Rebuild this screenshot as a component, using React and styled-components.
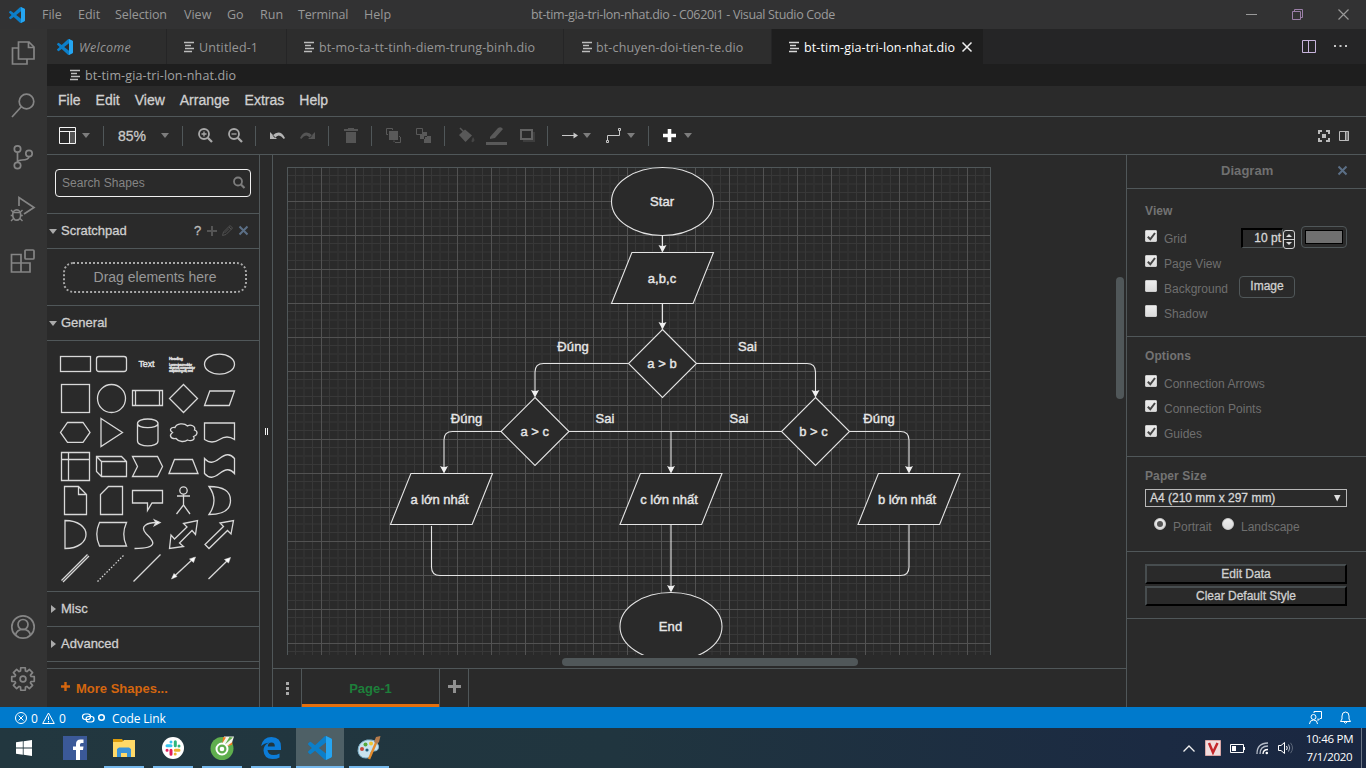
import React from "react";
import styled, { createGlobalStyle, css } from "styled-components";

const ui = `"Open Sans", "Noto Sans", sans-serif`;
const arial = `"Liberation Sans", Arial, sans-serif`;
const line = "#505759";

const Global = createGlobalStyle`
  * { box-sizing: border-box; }
  body { margin: 0; background: #2a2a2a; overflow: hidden; }
  svg { display: block; flex: none; overflow: visible; }
  button { font: inherit; }
`;

const Screen = styled.div`
  width: 1366px; height: 768px; display: flex; flex-direction: column;
  background: #2a2a2a; font-family: ${arial}; overflow: hidden;
`;
const heavy = css`-webkit-text-stroke: 0.3px currentColor;`;

/* ---------- window chrome ---------- */
const TitleBar = styled.header`
  height: 29px; flex: none; background: #323233; color: #989898; display: flex; align-items: center;
  font: 12.5px/29px ${ui}; padding-left: 9px;
`;
const MenuItem = styled.span`
  width: ${(p) => p.$w}px; flex: none; white-space: nowrap; letter-spacing: ${(p) => p.$ls || 0}px;
`;
const AppMark = styled.span`width: 33px; flex: none;`;
const WindowTitle = styled.span`
  width: 716px; flex: none; padding-left: 117px; white-space: nowrap; letter-spacing: ${(p) => p.$ls}px; color: #9b9b9b;
`;
const WindowButtons = styled.div`display: flex; gap: 35px;`;

const Workbench = styled.div`display: flex; height: 678px; flex: none;`;
const ActivityBar = styled.nav`
  width: 47px; flex: none; background: #333333; display: flex; flex-direction: column; align-items: center;
  padding: 11px 1px 15px 0; gap: 26px;
`;
const Push = styled.div`flex: 1;`;
const Editor = styled.main`flex: 1; display: flex; flex-direction: column; min-width: 0;`;
const TabStrip = styled.div`height: 35px; flex: none; background: #252526; display: flex;`;
const Tab = styled.div`
  width: ${(p) => p.$w}px; padding-left: ${(p) => p.$pl}px; display: flex; align-items: center; flex: none;
  background: ${(p) => (p.$active ? "#1e1e1e" : "#2d2d2d")}; color: ${(p) => (p.$active ? "#fff" : "#969696")};
  border-right: ${(p) => (p.$active ? 0 : 1)}px solid #252526; font: 12.5px/35px ${ui};
  font-style: ${(p) => (p.$italic ? "italic" : "normal")};
`;
const TabName = styled.span`
  width: ${(p) => p.$w}px; margin-left: ${(p) => p.$ml ?? 5}px; white-space: nowrap; letter-spacing: ${(p) => p.$ls ?? 0.13}px;
  padding-top: 1px;
`;
const TabActions = styled.div`margin-left: auto; display: flex; align-items: center; gap: 18px; padding-right: 18px;`;
const Crumbs = styled.div`
  height: 22px; flex: none; background: #1e1e1e; color: #a2a2a2; display: flex; align-items: center; padding-left: 23px;
  font: 12.5px/22px ${ui};
`;

/* ---------- diagram editor ---------- */
const DrawMenu = styled.div`
  height: 31px; flex: none; border-bottom: 1px solid ${line}; display: flex; gap: 15px; padding-left: 11px;
  font: 14px/28px ${arial}; color: #d0d0d0; ${heavy}
`;
const Toolbar = styled.div`
  height: 38px; flex: none; border-bottom: 1px solid ${line}; display: flex; align-items: center; padding-left: 12px;
`;
const Slot = styled.span`
  margin-left: ${(p) => p.$ml || 0}px; margin-right: ${(p) => p.$mr || 0}px; display: block;
`;
const Divider = styled.span`
  width: 1px; height: 20px; background: ${line}; margin: 0 ${(p) => p.$mr ?? 15}px 0 ${(p) => p.$ml ?? 13}px;
`;
const ZoomValue = styled.span`width: 42px; margin-left: -1px; font: 14px/20px ${arial}; color: #c8c8c8; ${heavy}`;
const Caret = styled.span`
  border: 4px solid transparent; border-top: 5px solid #7d7d7d; border-bottom: 0; margin-left: ${(p) => p.$ml ?? 6}px;
`;

const Body = styled.div`flex: 1; display: flex; min-height: 0;`;
const Sidebar = styled.aside`
  width: 213px; flex: none; border-right: 1px solid ${line}; display: flex; flex-direction: column;
`;
const SearchArea = styled.div`height: 59px; flex: none; border-bottom: 1px solid ${line}; padding: 14px 8px 0;`;
const SearchBox = styled.div`
  height: 28px; border: 1px solid #f0f0f0; border-radius: 4px; display: flex; align-items: center; justify-content: space-between;
  padding: 0 5px 0 6px; font-size: 12px; color: #858585; letter-spacing: 0.05px; line-height: 25px;
`;
const SectionHead = styled.div`
  height: 35px; flex: none; border-bottom: 1px solid ${line}; display: flex; align-items: center; padding-left: 2px;
  font: 13px/34px ${arial}; color: #cfcfcf; letter-spacing: ${(p) => p.$ls || 0}px; ${heavy}
`;
const SectionName = styled.span`margin-left: 4px; flex: 1; padding-bottom: 1px;`;
const Down = styled.i`border: 4px solid transparent; border-top: 5px solid #aaa; border-bottom: 0;`;
const Right = styled.i`border: 4px solid transparent; border-left: 5px solid #aaa; border-right: 0; margin: 0 1px 0 2px;`;
const HeadTools = styled.span`display: flex; align-items: center; width: 65px; gap: 5.500px; color: #bbb; padding-bottom: 1px;`;
const ScratchArea = styled.div`height: 57px; flex: none; border-bottom: 1px solid ${line}; padding: 13px 12px 0 16px;`;
const DropBox = styled.div`
  height: 31px; border: 2px dotted #a8a8a8; border-radius: 10px; text-align: center; font: 14px/27px ${arial}; color: #989898;
`;
const Palette = styled.div`
  height: 251px; flex: none; border-bottom: 1px solid ${line}; padding: 6px 0 0 10px; display: grid;
  grid-template-columns: repeat(5, 36px); grid-auto-rows: 34px;
`;
const MoreShapes = styled.div`
  margin-top: 6px; flex: 1; border-top: 1px solid ${line}; display: flex; padding-left: 14px; color: #d4660f;
  font: bold 13px/39px ${arial}; gap: 6px;
`;
const Splitter = styled.div`
  width: 13px; flex: none; border-right: 1px solid ${line}; display: flex; align-items: center; justify-content: center; gap: 1px;
`;
const Grip = styled.i`width: 1px; height: 7px; background: #f2f2f2;`;

const Center = styled.section`width: 853px; flex: none; display: flex; flex-direction: column;`;
const CanvasRow = styled.div`height: 500px; flex: none; display: flex;`;
const CanvasClip = styled.div`width: 843px; height: 500px; overflow: hidden;`;
const VTrack = styled.div`width: 10px; padding-top: 122px;`;
const VThumb = styled.div`width: 8px; height: 122px; border-radius: 4px; background: ${line};`;
const HTrack = styled.div`height: 13px; flex: none; padding: 3px 0 0 289px;`;
const HThumb = styled.div`width: 296px; height: 8px; border-radius: 4px; background: ${line};`;
const PageBar = styled.div`flex: 1; border-top: 1px solid ${line}; display: flex;`;
const PageCell = styled.div`
  width: ${(p) => p.$w}px; border-right: 1px solid ${line}; display: flex; align-items: center; justify-content: center;
  padding-bottom: ${(p) => p.$pb || 0}px;
`;
const PageTab = styled(PageCell)`
  font: bold 13px/35px ${arial}; color: #1d7f3a; box-shadow: inset 0 -3px 0 #e46f0d;
`;

const Panel = styled.aside`
  flex: 1; border-left: 1px solid ${line}; font: 12px/25px ${arial}; color: #6f6f6f; display: flex; flex-direction: column;
`;
const PanelHead = styled.div`
  height: 34px; flex: none; border-bottom: 1px solid ${line}; font: bold 13px/31px ${arial}; display: flex; align-items: center;
  padding: 0 0 2px 94px; letter-spacing: 0.05px; color: #707070;
`;
const PanelX = styled.span`margin-left: 65px;`;
const Group = styled.div`
  height: ${(p) => p.$h}px; flex: none; border-bottom: 1px solid ${line}; padding: ${(p) => p.$pt ?? 9}px 19px 0 18px;
`;
const GroupTitle = styled.div`font: bold 12px/26px ${arial}; letter-spacing: 0.1px; color: #737373;`;
const Row = styled.div`display: flex; height: 25px; padding-left: ${(p) => p.$pl || 0}px;`;
const Check = styled.span`
  width: 12px; height: 12px; flex: none; background: linear-gradient(#ededed, #dcdcdc); margin: 6px 7px 0 0; border: 1px solid #ccc;
  border-radius: ${(p) => (p.$round ? 6 : 1)}px; display: grid; place-items: center;
`;
const Dot = styled.i`width: 6px; height: 6px; border-radius: 3px; background: #555;`;
const RowText = styled.span`width: ${(p) => p.$w}px; padding-top: 3px; line-height: 22px; white-space: nowrap; margin-top: 1px;`;
const PtInput = styled.div`
  width: 42px; height: 20px; border: 2px inset #111; border-color: #000 ${line} ${line} #000; border-width: 2px 1px 1px 2px;
  font: 12px/17px ${arial}; color: #d6d6d6; text-align: right; padding-right: 1px; ${heavy}
`;
const Spin = styled.div`
  width: 12px; height: 19px; border: 1px solid #d0d0d0; border-radius: 3px; margin: 2px 6px 0 0; display: flex; flex-direction: column;
  align-items: center; justify-content: space-between; padding: 3px 0;
`;
const SpinArrow = styled.i`
  border: 3px solid transparent;
  ${(p) => (p.$up ? "border-bottom: 3px solid #ddd; border-top: 0;" : "border-top: 3px solid #ddd; border-bottom: 0;")}
`;
const SpinBar = styled.i`width: 10px; height: 1px; background: #d0d0d0;`;
const Swatch = styled.div`width: 46px; height: 22px; margin-top: -2px; border: 1px solid ${line}; border-radius: 4px; padding: 3px;`;
const SwatchFill = styled.div`height: 14px; background: #707070; border: 1px solid #000;`;
const ImageButton = styled.div`
  width: 56px; height: 22px; margin-top: 2px; border: 1px solid ${line}; border-radius: 4px; text-align: center; color: #d0d0d0;
  line-height: 18px; ${heavy}
`;
const Select = styled.div`
  height: 18px; border: 1px solid #b8b8b8; display: flex; justify-content: space-between; padding: 0 6px 0 4px; margin-bottom: 5px;
  color: #d6d6d6; line-height: 15px; align-items: center; ${heavy}
`;
const WideButton = styled.div`
  height: 20px; margin-bottom: 2px; border: 2px outset #555; border-color: #474d4f #000 #000 #474d4f; text-align: center;
  color: #d0d0d0; line-height: 16px; ${heavy}
`;

/* ---------- status bar and taskbar ---------- */
const StatusBar = styled.footer`
  height: 21px; flex: none; background: #007acc; color: #fff; display: flex; align-items: center; font: 12px/21px ${ui};
  padding-left: 15px;
`;
const StatusText = styled.span`width: ${(p) => p.$w}px; padding-left: 4px; white-space: nowrap; padding-top: 1px; letter-spacing: ${(p) => p.$ls || 0}px;`;
const Taskbar = styled.footer`
  height: 40px; flex: none; background: linear-gradient(90deg, #22373f, #20353f 45%, #1b2a42 85%, #1a2741); display: flex;
`;
const Task = styled.div`
  width: ${(p) => p.$w || 49}px; display: flex; flex-direction: column; align-items: center; justify-content: center; flex: none;
  background-color: ${(p) => (p.$active ? "#4e6066" : "transparent")};
  background-image: ${(p) => (p.$run ? "linear-gradient(#76b9ed, #76b9ed)" : "none")};
  background-size: ${(p) => (p.$active ? "100%" : "40px")} 2px; background-position: center bottom; background-repeat: no-repeat;
`;
const Tray = styled.div`margin-left: auto; display: flex; align-items: center; color: #fff;`;
const Clock = styled.div`
  width: 62px; margin-left: 5px; padding-right: 1px; font: 11.5px/18.5px ${ui}; text-align: center; letter-spacing: -0.25px;
`;
const DesktopEdge = styled.div`width: 5px; height: 40px; border-left: 1px solid #6c7686;`;

const Svg = ({ w, h, children, vb, ...rest }) => (
  <svg width={w} height={h} viewBox={vb || `0 0 ${w} ${h}`} fill="none" {...rest}>
    {children}
  </svg>
);

const VSMark = ({ s }) => (
  <Svg w={s} h={s} vb="0 0 24 24">
    <path
      fill="#0c7fc9"
      d="M23.15 2.587L18.21.21a1.494 1.494 0 0 0-1.705.29l-9.46 8.63-4.12-3.128a.999.999 0 0 0-1.276.057L.327 7.261A1 1 0 0 0 .326 8.74L3.899 12 .326 15.26a1 1 0 0 0 .001 1.479L1.65 17.94a.999.999 0 0 0 1.276.057l4.12-3.128 9.46 8.63a1.492 1.492 0 0 0 1.704.29l4.942-2.377A1.5 1.5 0 0 0 24 20.06V3.939a1.5 1.5 0 0 0-.85-1.352zm-5.146 14.861L10.826 12l7.178-5.448v10.896z"
    />
    <path fill="#25a5f1" d="M18 .1l5.15 2.49A1.5 1.5 0 0 1 24 3.94v16.12a1.5 1.5 0 0 1-.85 1.35L18 23.9z" />
  </Svg>
);
const FileLines = ({ bright }) => (
  <Svg w={10} h={10} stroke={bright ? "#d8d8d8" : "#bdbdbd"} strokeWidth="1.300">
    <path d="M0 .5H10M1 3.5H7M1 6.5H10M0 9.5H8" />
  </Svg>
);
const Cross = ({ s, c, sw = 1 }) => (
  <Svg w={s} h={s} stroke={c} strokeWidth={sw}>
    <path d={`M.5 .5L${s - 0.5} ${s - 0.5}M${s - 0.5} .5L.5 ${s - 0.5}`} />
  </Svg>
);
const Plus = ({ s, c, sw }) => (
  <Svg w={s} h={s} stroke={c} strokeWidth={sw}>
    <path d={`M${s / 2} 0V${s}M0 ${s / 2}H${s}`} />
  </Svg>
);

const gearPath = (() => {
  const pts = [];
  for (let i = 0; i < 8; i++) {
    const a = (i * Math.PI) / 4 - Math.PI / 2;
    [[-0.3, 8.4], [-0.2, 11.5], [0.2, 11.5], [0.3, 8.4]].forEach(([d, r]) =>
      pts.push(`${(12 + r * Math.cos(a + d)).toFixed(2)} ${(12 + r * Math.sin(a + d)).toFixed(2)}`)
    );
  }
  return `M${pts.join("L")}Z`;
})();

const Activity = ({ children }) => (
  <Svg w={26} h={26} stroke="#858585" strokeWidth="1.7">
    {children}
  </Svg>
);

const Activities = () => (
  <ActivityBar>
    <Activity>
      <path d="M8.5 2H19L24 7V19H8.5ZM18.5 2V7.5H24M8.5 8H2.5V24H17V19" />
    </Activity>
    <Activity>
      <circle cx="16.5" cy="9.5" r="7.3" />
      <path d="M11.3 14.7L2 25" />
    </Activity>
    <Activity>
      <circle cx="7.5" cy="5" r="3.2" /><circle cx="7.5" cy="21.5" r="3.2" /><circle cx="19" cy="9.5" r="3.2" />
      <path d="M7.5 8.2V18.3M19 12.7C18.5 16 15 16 12 16Q8 16 7.5 18.5" />
    </Activity>
    <Activity>
      <path d="M9 10V1.5L24 11.5L14 18" />
      <ellipse cx="6.7" cy="19" rx="4" ry="5.2" />
      <path d="M3.5 16.5H10M1 14L3.5 16.5M12.5 14L10 16.5M.7 19.5H3M10.5 19.5H12.8M1 25L3.5 22.5M12.5 25L10 22.5" strokeWidth="1.4" />
    </Activity>
    <Activity>
      <path d="M1.5 6.5H11V24H1.5ZM1.5 15H20V24H11" />
      <rect x="15" y="2" width="9" height="9" rx="1" />
    </Activity>
    <Push />
    <Activity>
      <circle cx="13" cy="13" r="11.2" /><circle cx="13" cy="10.5" r="5" />
      <path d="M5.5 21Q7 15.3 13 15.3T20.5 21" />
    </Activity>
    <Activity>
      <g transform="translate(1 1)">
        <path d={gearPath} strokeLinejoin="round" />
        <circle cx="12" cy="12" r="2.9" />
      </g>
    </Activity>
  </ActivityBar>
);

const TitleRow = () => (
  <TitleBar>
    <AppMark><VSMark s={16} /></AppMark>
    <MenuItem $w={36}>File</MenuItem>
    <MenuItem $w={37}>Edit</MenuItem>
    <MenuItem $w={69} $ls={-0.1}>Selection</MenuItem>
    <MenuItem $w={43}>View</MenuItem>
    <MenuItem $w={33}>Go</MenuItem>
    <MenuItem $w={38}>Run</MenuItem>
    <MenuItem $w={66} $ls={-0.15}>Terminal</MenuItem>
    <MenuItem $w={50}>Help</MenuItem>
    <WindowTitle $ls={-0.34}>bt-tim-gia-tri-lon-nhat.dio - C0620i1 - Visual Studio Code</WindowTitle>
    <Push />
    <WindowButtons>
      <Svg w={11} h={11} stroke="#999"><path d="M0 5.5H11" /></Svg>
      <Svg w={11} h={11} stroke="#9b7fa8"><path d="M.5 2.5H8.5V10.5H.5ZM2.5 2V.5H10.5V8.5H9" /></Svg>
      <Cross s={11} c="#999" sw={1.2} />
    </WindowButtons>
    <Slot $mr={17} />
  </TitleBar>
);

const Tabs = () => (
  <TabStrip>
    <Tab $w={120} $pl={10} $italic><VSMark s={16} /><TabName $ml={6} $ls={0.3}>Welcome</TabName></Tab>
    <Tab $w={120} $pl={17}><FileLines /><TabName>Untitled-1</TabName></Tab>
    <Tab $w={277} $pl={17}><FileLines /><TabName>bt-mo-ta-tt-tinh-diem-trung-binh.dio</TabName></Tab>
    <Tab $w={208} $pl={18}><FileLines /><TabName $ml={4}>bt-chuyen-doi-tien-te.dio</TabName></Tab>
    <Tab $w={211} $pl={17} $active><FileLines bright /><TabName $w={158}>bt-tim-gia-tri-lon-nhat.dio</TabName><Cross s={10} c="#eee" sw={1.5} /></Tab>
    <TabActions>
      <Svg w={14} h={13} stroke="#c8b4dc"><path d="M.5 .5H13.5V12.5H.5ZM6.5 .5V12.5" /></Svg>
      <Svg w={14} h={3} fill="#c5c5c5"><path fill="#c5c5c5" d="M0 0H2V2H0ZM5.5 0H7.5V2H5.5ZM11 0H13V2H11Z" /></Svg>
    </TabActions>
  </TabStrip>
);

const Mag = ({ sign }) => (
  <Svg w={15} h={15} stroke="#a8a8a8" strokeWidth="1.8">
    <circle cx="6" cy="6" r="5" /><path d="M9.8 9.8L14 14" strokeWidth="2.3" />
    <path d={sign === "in" ? "M3.5 6H8.5M6 3.5V8.5" : "M3.5 6H8.5"} strokeWidth="1.3" />
  </Svg>
);

const Tools = () => (
  <Toolbar>
    <Svg w={17} h={17}><path fill="#555" d="M11 5H16V16H11Z" /><path stroke="#f4f4f4" d="M.5 .5H16.5V16.5H.5ZM.5 4.500H16.5M10.5 4.500V16.5" /></Svg>
    <Caret />
    <Divider />
    <ZoomValue>85%</ZoomValue>
    <Caret $ml={1} />
    <Divider />
    <Mag sign="in" /><Slot $ml={15} /><Mag sign="out" />
    <Divider $ml={12} $mr={14} />
    <Svg w={15} h={9}><path fill="#b5b5b5" d="M0 1L0 8H7ZM2.500 4.500Q10-2.500 15 7L13.800 8Q9 1.500 5 7Z" /></Svg>
    <Slot $ml={15} />
    <Svg w={15} h={9}><path fill="#555" d="M15 1L15 8H8ZM12.500 4.500Q5-2.500 0 7L1.200 8Q6 1.500 10 7Z" /></Svg>
    <Divider />
    <Svg w={14} h={15}><path fill="#555" d="M0 1H4V0H10V1H14V3H0ZM2 4H12V15H2Z" /></Svg>
    <Divider $mr={14} />
    <Svg w={15} h={15}><path fill="#595959" d="M3 3H12V12H3Z" /><path stroke="#595959" d="M2 6.5H.5V.5H6.5V2M9 14.5H14.5V9M8 14V12.5M14 8.5H13" /></Svg>
    <Slot $ml={15} />
    <Svg w={15} h={15}><path fill="#595959" d="M4 4H11V11H4Z" /><path fill="#2a2a2a" stroke="#595959" d="M.5 .5H6.5V6.5H.5Z" /><path fill="#595959" d="M8 8H15V15H8Z" /><path stroke="#2a2a2a" d="M8.500 11V8.500H11" /></Svg>
    <Divider $mr={14} />
    <Svg w={16} h={16}><path fill="#595959" d="M0 7L6 1.5L13 7.5L6.5 14Z" /><path stroke="#595959" d="M1 0L8 7" strokeWidth="1.5" /><path fill="#444" d="M14 9Q17 13 14 14T14 9" /></Svg>
    <Slot $ml={11} />
    <Svg w={21} h={18}><path fill="#595959" d="M0 15H21V18H0ZM4 10L12 1Q15-1 17 2L9 11L4 12Z" /></Svg>
    <Slot $ml={13} />
    <Svg w={15} h={13}><path fill="#3d3d3d" d="M3 3H15V13H3Z" /><path fill="#2a2a2a" stroke="#626262" strokeWidth="2" d="M1 1H12V10H1Z" /></Svg>
    <Divider $ml={12} $mr={14} />
    <Svg w={16} h={7}><path stroke="#c8c8c8" d="M0 3.5H13" /><path fill="#c8c8c8" d="M11.500 .5L16 3.5L11.500 6.5Z" /></Svg>
    <Caret $ml={5} />
    <Slot $ml={15} />
    <Svg w={15} h={16}><path stroke="#c8c8c8" d="M1.5 12V7.5H13.5V3" /><path stroke="#c8c8c8" d="M.5 12.5H2.5V14.5H.5ZM12.5 .5H14.5V2.5H12.5Z" /></Svg>
    <Caret />
    <Divider $mr={14} />
    <Plus s={13} c="#fff" sw={3.6} />
    <Caret $ml={8} />
    <Push />
    <Svg w={12} h={12} stroke="#bbb" strokeWidth="2"><path d="M1 4V1H4M8 1H11V4M11 8V11H8M4 11H1V8" /><path fill="#bbb" stroke="none" d="M4 4H8V8H4Z" /></Svg>
    <Slot $ml={9} />
    <Svg w={10} h={10}><path fill="#777" d="M7 0H10V10H7Z" /><path stroke="#bbb" d="M.5 .5H9.5V9.5H.5ZM6.5 0V10" /></Svg>
    <Slot $ml={17} />
  </Toolbar>
);

const cellShapes = [
  <rect x="3.5" y="9.5" width="30" height="15" />,
  <rect x="3.5" y="9.5" width="30" height="15" rx="2.5" />,
  <text x="17.5" y="20" fontSize="9" textLength="16" textAnchor="middle" fill="#fff" strokeWidth=".4">Text</text>,
  <g fill="#fff" strokeWidth=".35" fontSize="4">
    <text x="4" y="13" fontWeight="bold" textLength="14">Heading</text>
    <text x="4" y="18.5" textLength="23">Lorem ipsum dolor</text>
    <text x="4" y="21.7" textLength="26">sit amet, consectetur</text>
    <text x="4" y="24.9" textLength="24">adipisicing elit, sed</text>
  </g>,
  <ellipse cx="18.5" cy="17.2" rx="15" ry="10" />,
  <rect x="4.5" y="3.5" width="28" height="28" />,
  <circle cx="18.5" cy="17.5" r="14" />,
  <path d="M3.5 9.5H33.5V24.5H3.5ZM6.5 9.5V24.5M30.5 9.5V24.5" />,
  <path d="M18.5 3.5L32.5 17.5L18.5 31.5L4.5 17.5Z" />,
  <path d="M8.8 10H33.5L28.3 24.5H3.5Z" />,
  <path d="M10.5 7.5H26L33 17.5L26 27.3H10.5L3.5 17.5Z" />,
  <path d="M8 3.5L29.5 17.5L8 31.5Z" />,
  <path d="M8.5 8.5V26C8.5 32.5 29 32.5 29 26V8.5C29 2.5 8.5 2.5 8.5 8.5C8.5 14 29 14 29 8.5" />,
  <path d="M10 12.5C6 12 3.500 15 7.500 17.500C4 20 5 24 11 23.500C14 27.500 20 27 22.500 25C27 26.500 30.500 24.500 28.500 21.500C33 20 33 16 29.500 15C31 11 25.500 9 22.500 11C19 7.500 11.500 8.500 10 12.500Z" />,
  <path d="M3.5 8H33.5V24.500Q26 19.500 18.500 24.500T3.500 24.500Z" />,
  <path d="M4.5 3.500H32.500V31.500H4.500ZM11.500 3.500V31.500M4.500 10.500H32.500" />,
  <path d="M3.500 7.500H28.500L33.500 12.500V27.500H8.500L3.500 22.500ZM3.500 7.500L8.500 12.500H33.500M8.500 12.500V27.500" />,
  <path d="M3.500 7.500H28.500L33.500 17.500L28.500 27.500H3.500L8.500 17.500Z" />,
  <path d="M4 24.500L9.500 10.500H27.500L33 24.500Z" />,
  <path d="M3.500 9.500C8.500 15 12.500 14 18.500 9.500S29 4 33.500 9.500V24.500C29 19 24.500 20 18.500 24.500S8.500 30 3.500 24.500Z" />,
  <path d="M7.500 3.500H21.500L29.500 11.500V31.500H7.500ZM21.500 3.500V11.500H29.500" />,
  <path d="M15.500 3.500H29.500V31.500H7.500V11.500Z" />,
  <path d="M3.500 7.500H33.500V20H23L18.500 27.500V20H3.500Z" />,
  <g><circle cx="18.500" cy="7.500" r="3.700" /><path d="M18.500 11.200V22M12 13H25M18.500 22L11.500 31M18.500 22L25 31" /></g>,
  <path d="M8 3.500Q29.500 3.500 29.500 17.500T8 31.500Q18 17.500 8 3.500Z" />,
  <path d="M8 3.500C36 3.500 36 31.500 8 31.500Z" />,
  <path d="M6.500 5.500H33.500Q28 17.500 33.500 29H6.500Q1 17.500 6.500 5.500Z" />,
  <g><path d="M5.500 31.500C34 31.500 22 21.500 17 16.500C10 9 19 5.500 27 5.500" /><path fill="#fff" d="M25.500 3L31 5.500L25.500 8.500L27 5.500Z" /></g>,
  <path d="M4.500 31.500L6 18L9.500 22L22 10L18.500 6.500L32.500 3.500L30.500 17.500L27 13.500L14.500 26L18.500 29.500Z" />,
  <path d="M4 27.500L22.500 9.500L19 6L32.500 3.500L30 17L26.500 13.500L8 31.500Z" />,
  <path d="M4.500 29.500L30.500 3.500M6 31L32 5" />,
  <path strokeDasharray="1.5 1.700" d="M4.500 30.500L31 4" />,
  <path d="M4.500 30.500L31.500 3.500" />,
  <g><path d="M8 26.500L29 7" /><path fill="#fff" strokeWidth=".6" d="M6.500 28L9 22.500L12 25.500ZM30.500 6L24.500 8L28.500 11.500Z" /></g>,
  <g><path d="M7.500 28L28 8" /><path fill="#fff" strokeWidth=".6" d="M29.500 6.500L23.500 8.500L27.500 12Z" /></g>,
];

const ShapeSidebar = () => (
  <Sidebar>
    <SearchArea>
      <SearchBox>
        Search Shapes
        <Svg w={12} h={12} stroke="#7d7d7d" strokeWidth="1.8"><circle cx="5" cy="4.500" r="4" /><path d="M8 7.500L11.500 11" strokeWidth="2.2" /></Svg>
      </SearchBox>
    </SearchArea>
    <SectionHead>
      <Down /><SectionName>Scratchpad</SectionName>
      <HeadTools>
        <span>?</span>
        <Plus s={10} c="#555" sw={2} />
        <Svg w={11} h={11} stroke="#505050"><path d="M.5 10.500L1.500 7L8 .5L10.500 3L4 9.500ZM7 2L9.500 4.500M2.500 8L7 3.500" /></Svg>
        <Cross s={9} c="#5b6f86" sw={2} />
      </HeadTools>
    </SectionHead>
    <ScratchArea><DropBox>Drag elements here</DropBox></ScratchArea>
    <SectionHead><Down /><SectionName>General</SectionName></SectionHead>
    <Palette>
      {cellShapes.map((shape, i) => (
        <Svg key={i} w={36} h={34} stroke="#d8d8d8" strokeWidth="1.300" fontFamily="Liberation Sans">{shape}</Svg>
      ))}
    </Palette>
    <SectionHead><Right /><SectionName>Misc</SectionName></SectionHead>
    <SectionHead><Right /><SectionName>Advanced</SectionName></SectionHead>
    <MoreShapes><Svg w={9} h={37}><path stroke="#d4660f" strokeWidth="2.400" d="M4.500 13V22M0 17.500H9" /></Svg>More Shapes...</MoreShapes>
  </Sidebar>
);

/* ---------- flow chart; canvas units are pixels from the canvas corner ---------- */
const Para = ({ x, y }) => <path d={`M${x + 20.4} ${y}h81.6l-20.4 51h-81.6z`} />;
const Rhomb = ({ x, y }) => <path d={`M${x} ${y - 34}l34 34l-34 34l-34-34z`} />;
const Arrow = ({ x, y }) => <path fill="#f0f0f0" stroke="none" d={`M${x} ${y}l-4-7.500q4 2 8 0z`} />;
const Label = ({ x, y, w, children }) => (
  <text x={x - w / 2} y={y + 4.500} textLength={w}>{children}</text>
);

const FlowChart = () => (
  <Svg w={843} h={500} vb="273 155 843 500">
    <defs>
      <pattern id="grid" x="287" y="167" width="34" height="34" patternUnits="userSpaceOnUse">
        <path fill="#303030" d="M16 0h2v34h-2zM0 16h34v2h-34z" />
        <path fill="#383838" d="M8 0h1v34h-1zM25 0h1v34h-1zM0 8h34v1h-34zM0 25h34v1h-34z" />
        <path fill="#525252" d="M0 0h1v34h-1zM0 0h34v1h-34z" />
      </pattern>
    </defs>
    <rect x="287" y="167" width="704" height="520" fill="url(#grid)" />
    <path stroke={line} d="M287.500 700V167.500H990.500V700" />
    <g stroke="#e4e4e4" fill="#2a2a2a" strokeWidth="1.100">
      <path fill="none" d="M662.500 235.500V248M662.500 303.500V325M628.500 363.500H543.500Q535 363.500 535 372V392M696.500 363.500H807Q815.500 363.500 815.500 372V392" />
      <path fill="none" d="M501 431.500H452.500Q444 431.500 444 440V468M569 431.500H781.500M671 431.500V468M849.500 431.500H900.500Q909 431.500 909 440V468" />
      <path fill="none" d="M431.500 526V567Q431.500 575.500 440 575.500H900.500Q909 575.500 909 567V524.500M671 524.500V587" />
      <ellipse cx="662.500" cy="201.500" rx="51" ry="34" />
      <ellipse cx="671" cy="626.500" rx="51" ry="34" />
      <Para x={611.500} y={252.500} />
      <Para x={390.500} y={473.500} />
      <Para x={620} y={473.500} />
      <Para x={858} y={473.500} />
      <Rhomb x={662.500} y={363.500} />
      <Rhomb x={535} y={431.500} />
      <Rhomb x={815.500} y={431.500} />
    </g>
    <Arrow x={662.500} y={252.500} /><Arrow x={662.500} y={329.500} /><Arrow x={535} y={397.500} /><Arrow x={815.500} y={397.500} />
    <Arrow x={444} y={473.500} /><Arrow x={671} y={473.500} /><Arrow x={909} y={473.500} /><Arrow x={671} y={592.500} />
    <g fill="#e6e6e6" stroke="#e6e6e6" strokeWidth=".4" fontFamily="Liberation Sans" fontSize="13">
      <Label x={662} y={201.500} w={24}>Star</Label>
      <Label x={662} y={278.500} w={28.500}>a,b,c</Label>
      <Label x={662} y={363.500} w={29.500}>a &gt; b</Label>
      <Label x={573} y={346.500} w={31.500}>Đúng</Label>
      <Label x={747.500} y={346.500} w={19}>Sai</Label>
      <Label x={466.500} y={418.500} w={31.500}>Đúng</Label>
      <Label x={534.700} y={431.500} w={28.500}>a &gt; c</Label>
      <Label x={605} y={418.500} w={19}>Sai</Label>
      <Label x={739} y={418.500} w={19}>Sai</Label>
      <Label x={813.500} y={431.500} w={28.500}>b &gt; c</Label>
      <Label x={879} y={418.500} w={31.500}>Đúng</Label>
      <Label x={439.500} y={499.500} w={58}>a lớn nhất</Label>
      <Label x={669} y={499.500} w={57.500}>c lớn nhất</Label>
      <Label x={907} y={499.500} w={58}>b lớn nhất</Label>
      <Label x={670.500} y={626.500} w={23.500}>End</Label>
    </g>
  </Svg>
);

const CheckBox = ({ on }) => (
  <Check>{on && <Svg w={9} h={9} stroke="#444" strokeWidth="2"><path d="M.8 4.800L3.300 7.300L8 1" /></Svg>}</Check>
);

const FieldSlot = styled(Slot)`padding-top: 4px;`;

const FormatPanel = () => (
  <Panel>
    <PanelHead>Diagram<PanelX><Cross s={9} c="#5b6f86" sw={2} /></PanelX></PanelHead>
    <Group $h={148}>
      <GroupTitle>View</GroupTitle>
      <Row><CheckBox on /><RowText $w={77}>Grid</RowText>
        <FieldSlot><PtInput>10 pt</PtInput></FieldSlot>
        <FieldSlot><Spin><SpinArrow $up /><SpinBar /><SpinArrow /></Spin></FieldSlot>
        <FieldSlot><Swatch><SwatchFill /></Swatch></FieldSlot>
      </Row>
      <Row><CheckBox on /><RowText>Page View</RowText></Row>
      <Row><CheckBox /><RowText $w={75}>Background</RowText><Slot><ImageButton>Image</ImageButton></Slot></Row>
      <Row><CheckBox /><RowText>Shadow</RowText></Row>
    </Group>
    <Group $h={120} $pt={6}>
      <GroupTitle>Options</GroupTitle>
      <Row><CheckBox on /><RowText>Connection Arrows</RowText></Row>
      <Row><CheckBox on /><RowText>Connection Points</RowText></Row>
      <Row><CheckBox on /><RowText>Guides</RowText></Row>
    </Group>
    <Group $h={95} $pt={6}>
      <GroupTitle>Paper Size</GroupTitle>
      <Select>A4 (210 mm x 297 mm)<Svg w={6} h={7}><path fill="#ddd" d="M0 0H6.500L3.200 6.500Z" /></Svg></Select>
      <Row $pl={9}><Check $round><Dot /></Check><RowText $w={49}>Portrait</RowText><Check $round /><RowText>Landscape</RowText></Row>
    </Group>
    <Group $h={67} $pt={12}>
      <WideButton>Edit Data</WideButton>
      <WideButton>Clear Default Style</WideButton>
    </Group>
  </Panel>
);

const Taskband = () => (
  <Taskbar>
    <Task $w={48}>
      <Svg w={16} h={16}><path fill="#fff" d="M0 2.300L6.800 1.300V7.600H0ZM7.600 1.200L16 0V7.600H7.600ZM0 8.400H6.800V14.700L0 13.700ZM7.600 8.400H16V16L7.600 14.800Z" /></Svg>
    </Task>
    <Task $w={54}>
      <Svg w={24} h={24}><path fill="#3b5998" d="M0 0H24V24H0Z" /><path fill="#fff" d="M13 24V14H10V10.500H13V8Q13 3.500 17.500 3.500H20.500V7H18.500Q17 7 17 8.500V10.500H20.500L20 14H17V24Z" /></Svg>
    </Task>
    <Task $w={44} $run>
      <Svg w={22} h={19}><path fill="#dc9c0c" d="M0 0H9L11 3H0Z" /><path fill="#ffd968" d="M0 3H9L11 1H22V18H0Z" /><path fill="#3a93d8" d="M4 18V10L6 8.500H16L18 10V18H14V14H8V18Z" /></Svg>
    </Task>
    <Task $w={53} $run>
      <Svg w={22} h={22}>
        <circle cx="11" cy="11" r="11" fill="#fff" />
        <g strokeWidth="3" strokeLinecap="round">
          <path stroke="#36c5f0" d="M9 5V5.100M5 8.700H9" /><path stroke="#2eb67d" d="M13.300 4.800V8.700M17 8.900V9" />
          <path stroke="#ecb22e" d="M13.300 13.200H17M13.200 17V17.100" /><path stroke="#e01e5a" d="M9 13.200V17.200M5 13.200H5.100" />
        </g>
      </Svg>
    </Task>
    <Task $w={46} $run>
      <Svg w={24} h={24}>
        <circle cx="12" cy="12.500" r="11.500" fill="#5fae4e" /><path fill="#f6f6ee" d="M12 11L14 .5H24L21.500 8L15 12Z" />
        <circle cx="12" cy="13" r="5.500" fill="#5fae4e" stroke="#fff" strokeWidth="2" /><circle cx="12" cy="13" r="2.300" fill="#fff" />
        <path fill="#ef7b22" d="M12.500 7L13 1L16 1.500ZM17 10L22.500 6L22 9Z" /><path fill="#5fae4e" d="M15 8.500L19.500 1L23 1.500Z" />
      </Svg>
    </Task>
    <Task $w={51} $run>
      <Svg w={20} h={22}>
        <path fill="#0c7cd8" d="M0 9Q2 0 10.500 0Q20 0 20 10V13H6.500Q7 18 12.500 18Q16 18 18.500 16.500V20.500Q16 22 11.500 22Q3 22 2.500 13.500Q2.500 8 8 5.500Q3 6 0 9ZM6.800 9.500H13.800Q14 5.500 10.500 5.500T6.800 9.500Z" />
      </Svg>
    </Task>
    <Task $w={48} $active $run><VSMark s={24} /></Task>
    <Task $w={49} $run>
      <Svg w={24} h={24}>
        <path fill="#c8e2ee" stroke="#7fb3cc" d="M1 15Q1 6 10 4Q20 3 21.500 10Q22 15 17 15Q13 15 14 18Q14 22 9 22Q2 22 1 15Z" />
        <circle cx="5" cy="13" r="2" fill="#c9453a" /><circle cx="8.500" cy="8.500" r="2" fill="#55a83c" /><circle cx="14" cy="7.500" r="2" fill="#edc533" />
        <circle cx="10" cy="14" r="1.600" fill="#1e5d7c" /><path stroke="#e38b2c" strokeWidth="2.400" d="M12 23L19 7" /><path fill="#b47b4c" d="M17 6L19 1L23.500 0L22 6L20 8Z" />
      </Svg>
    </Task>
    <Tray>
      <Svg w={12} h={7} stroke="#f0f0f0" strokeWidth="1.300"><path d="M.5 6.500L6 1L11.500 6.500" /></Svg>
      <Slot $ml={10} />
      <Svg w={16} h={16}><path fill="#f1dddd" stroke="#d9a6a6" d="M.5 .5H15.500V15.500H.5Z" /><path stroke="#c3272b" strokeWidth="2.500" d="M4 3L8 12.500L12.500 3" /></Svg>
      <Slot $ml={9} />
      <Svg w={15} h={9}><path stroke="#fff" d="M.5 .5H13.500V8.500H.5Z" /><path fill="#fff" d="M2 2H6V7H2ZM14 3H15V6H14Z" /></Svg>
      <Slot $ml={11} />
      <Svg w={13} h={13} strokeWidth="1.300">
        <path stroke="#b5bcc8" d="M1 12Q1 1 12 1M4 12Q4 4 12 4" /><path stroke="#fff" d="M7 12Q7 7.500 12 7.500" /><circle cx="10.800" cy="11" r="1.300" fill="#fff" />
      </Svg>
      <Slot $ml={9} />
      <Svg w={16} h={12}><path stroke="#fff" d="M.5 3.500H3L6.500 .5V11.500L3 8.500H.5ZM8.500 4Q10 6 8.500 8" /><path stroke="#a9b1bf" d="M10.500 2.500Q13 6 10.500 9.500" /><path stroke="#5c6779" d="M12.500 .8Q16.500 6 12.500 11.200" /></Svg>
      <Clock>10:46 PM<br />7/1/2020</Clock>
      <DesktopEdge />
    </Tray>
  </Taskbar>
);

export default function App() {
  return (
    <Screen>
      <Global />
      <TitleRow />
      <Workbench>
        <Activities />
        <Editor>
          <Tabs />
          <Crumbs><FileLines /><TabName>bt-tim-gia-tri-lon-nhat.dio</TabName></Crumbs>
          <DrawMenu>
            {["File", "Edit", "View", "Arrange", "Extras", "Help"].map((m) => <span key={m}>{m}</span>)}
          </DrawMenu>
          <Tools />
          <Body>
            <ShapeSidebar />
            <Splitter><Grip /><Grip /></Splitter>
            <Center>
              <CanvasRow>
                <CanvasClip><FlowChart /></CanvasClip>
                <VTrack><VThumb /></VTrack>
              </CanvasRow>
              <HTrack><HThumb /></HTrack>
              <PageBar>
                <PageCell $w={29}><Svg w={3} h={13}><path fill="#aaa" d="M0 0H3V3H0ZM0 5H3V8H0ZM0 10H3V13H0Z" /></Svg></PageCell>
                <PageTab $w={138}>Page-1</PageTab>
                <PageCell $w={29} $pb={3}><Plus s={13} c="#909090" sw={3} /></PageCell>
              </PageBar>
            </Center>
            <FormatPanel />
          </Body>
        </Editor>
      </Workbench>
      <StatusBar>
        <Svg w={12} h={12} stroke="#fff"><circle cx="6" cy="6" r="5.500" /><path d="M3.500 3.500L8.500 8.500M8.500 3.500L3.500 8.500" /></Svg>
        <StatusText $w={15}>0</StatusText>
        <Svg w={13} h={12} stroke="#fff"><path d="M6.500 1L12.300 11.500H.7ZM6.500 4.500V8M6.500 9V10.500" /></Svg>
        <StatusText $w={27}>0</StatusText>
        <Svg w={12} h={10} stroke="#fff" strokeWidth="1.200"><rect x=".5" y="1" width="8" height="5.500" rx="2.700" /><rect x="4" y="3.500" width="8" height="5.500" rx="2.700" /></Svg>
        <Slot $ml={4} />
        <Svg w={7} h={7} stroke="#fff" strokeWidth="1.500"><circle cx="3.500" cy="3.500" r="2.800" /></Svg>
        <StatusText $w={70} $ls={-0.15}>&nbsp;Code Link</StatusText>
        <Push />
        <Svg w={13} h={13} stroke="#fff"><path d="M5 2V.5H12.500V7.500H11L9 9.500V7.500M.5 13Q.5 9 4.500 9T8.500 13" /><circle cx="4.500" cy="6" r="2.500" /></Svg>
        <Slot $ml={18} />
        <Svg w={11} h={13} stroke="#fff"><path d="M.5 10.500L2 8V5Q2 1 5.500 1T9 5V8L10.500 10.500ZM4 11Q5.500 13.500 7 11" /></Svg>
        <Slot $ml={15} />
      </StatusBar>
      <Taskband />
    </Screen>
  );
}
